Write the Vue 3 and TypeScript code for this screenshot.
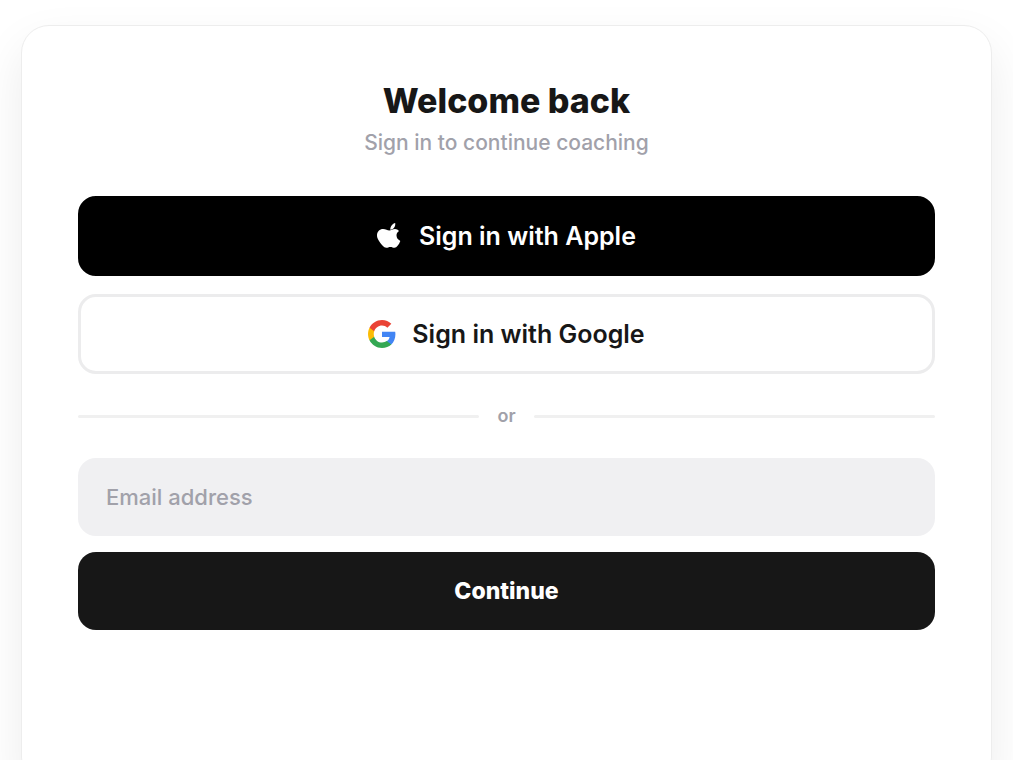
<script setup lang="ts">
import { ref } from 'vue'

const email = ref<string>('')
</script>

<template>
  <main class="page">
    <section class="card">
      <header class="heading">
        <h1>Welcome back</h1>
        <p>Sign in to continue coaching</p>
      </header>

      <div class="providers">
        <button type="button" class="provider apple">
          <svg class="apple-icon" viewBox="0 0 24 26" aria-hidden="true">
            <path fill="currentColor" d="M18.200 0c.3 1.900-.2 3.700-1.400 5.100-1 1.200-2.200 1.800-3.500 1.700-.1-1.700.4-3.200 1.500-4.600C15.700 1 16.900.300 18.200 0Z" />
            <path fill="currentColor" d="M12.300 7.500c1.600 0 3.200-1.600 5.700-1.600 1.600 0 3 .7 4 2-1.700 1.200-2.600 2.700-2.500 4.700.1 2.400 1.400 4.200 3.800 5.300-.7 2-1.600 3.600-2.700 4.900-.9 1.200-1.900 2-3.200 2-1.500 0-2.200-.8-4-.8-1.800 0-2.500.8-4.100.8-1.300 0-2.500-.8-3.600-2C3.800 20.700 2.300 18.600 1.400 16.900.5 15.300 0 14 0 12.200 0 8.500 2.700 5.900 6.100 5.900c2.700 0 4.300 1.600 6.200 1.600Z" />
          </svg>
          <span>Sign in with Apple</span>
        </button>
        <button type="button" class="provider google">
          <svg class="google-icon" viewBox="0 0 24 24" aria-hidden="true">
            <path fill="#4285F4" d="M23.500 12.300c0-.8-.1-1.600-.2-2.300H12v4.500h6.500c-.3 1.500-1.100 2.800-2.400 3.600v3h3.900c2.200-2.100 3.500-5.100 3.500-8.800Z" />
            <path fill="#34A853" d="M12 24c3.200 0 6-1.100 8-2.900l-3.900-3c-1.100.7-2.500 1.200-4.100 1.200-3.100 0-5.800-2.100-6.700-5H1.300v3.100C3.300 21.300 7.300 24 12 24Z" />
            <path fill="#FBBC05" d="M5.300 14.300c-.5-1.500-.5-3.100 0-4.600V6.600h-4c-1.700 3.400-1.700 7.400 0 10.800l4-3.100Z" />
            <path fill="#EA4335" d="M12 4.800c1.800 0 3.300.6 4.600 1.800L20 3.200C17.900 1.200 15.200 0 12 0 7.300 0 3.300 2.700 1.300 6.600l4 3.100c.9-2.800 3.600-4.900 6.700-4.900Z" />
          </svg>
          <span>Sign in with Google</span>
        </button>
      </div>

      <div class="divider"><span>or</span></div>

      <form class="email-form" @submit.prevent>
        <input v-model="email" type="email" placeholder="Email address" aria-label="Email address" />
        <button type="submit">Continue</button>
      </form>
    </section>
  </main>
</template>

<style>
body {
  margin: 0;
  background: #fff;
}
</style>

<style scoped>
.page {
  box-sizing: border-box;
  height: 100vh;
  padding: 25px 21px 0;
  overflow: hidden;
  font-family: Inter, "Liberation Sans", sans-serif;
  color: #171717;
}

.card {
  box-sizing: border-box;
  min-height: 100vh;
  padding: 55px 56px;
  border: 1px solid #ededed;
  border-radius: 28px;
  background: #fff;
  box-shadow: 0 20px 48px rgba(0, 0, 0, 0.08);
}

.heading {
  text-align: center;
}

h1 {
  margin: 0;
  font-size: 34px;
  font-weight: 800;
  line-height: 40px;
}

.heading p {
  margin: 7px 0 0;
  font-size: 21px;
  font-weight: 500;
  line-height: 30px;
  color: #a1a1aa;
}

.providers {
  display: grid;
  gap: 18px;
  margin-top: 38px;
}

button {
  font-family: inherit;
  cursor: pointer;
}

.provider {
  box-sizing: border-box;
  display: flex;
  align-items: center;
  justify-content: center;
  gap: 18px;
  height: 80px;
  border: 3px solid #000;
  border-radius: 18px;
  font-size: 25px;
  font-weight: 600;
  line-height: 30px;
}

.apple {
  padding-bottom: 2px;
  background: #000;
  color: #fff;
}

.google {
  gap: 16px;
  border-color: #ececed;
  background: #fff;
  color: #171717;
}

.apple-icon {
  width: 24px;
  height: 26px;
}

.google-icon {
  width: 28px;
  height: 28px;
}

.divider {
  display: flex;
  align-items: center;
  gap: 18px;
  margin: 30px 0;
  font-size: 18px;
  font-weight: 600;
  line-height: 24px;
  color: #a1a1aa;
}

.divider::before,
.divider::after {
  flex: 1;
  height: 3px;
  border-radius: 2px;
  background: #f0f0f0;
  content: "";
}

.email-form {
  display: grid;
  gap: 16px;
}

input {
  box-sizing: border-box;
  width: 100%;
  height: 78px;
  padding: 0 28px;
  border: 0;
  border-radius: 18px;
  background: #f0f0f2;
  color: #171717;
  font-family: inherit;
  font-size: 22px;
  font-weight: 500;
}

input::placeholder {
  color: #a1a1aa;
  opacity: 1;
}

.email-form button {
  height: 78px;
  border: 0;
  border-radius: 18px;
  background: #171717;
  color: #fff;
  font-size: 23px;
  font-weight: 800;
}
</style>
